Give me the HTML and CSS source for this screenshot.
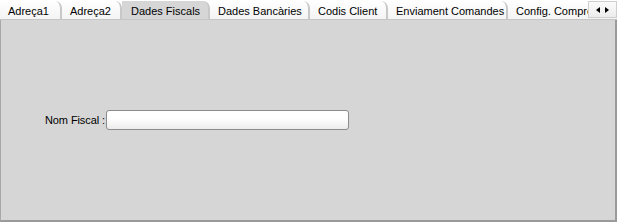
FILE: index.html
```html
<!DOCTYPE html>
<html>
<head>
    <title>Client</title>
    <link rel="stylesheet" href="styles.css">
</head>
<body>
    <div class="tab-window">
        <div class="tab-strip">
            <div class="tabs">
                <div class="tab" style="width: 62px">Adreça1</div>
                <div class="tab" style="width: 60px">Adreça2</div>
                <div class="tab active" style="width: 88px">Dades Fiscals</div>
                <div class="tab" style="width: 100px">Dades Bancàries</div>
                <div class="tab" style="width: 78px">Codis Client</div>
                <div class="tab" style="width: 120px">Enviament Comandes</div>
                <div class="tab last" style="width: 110px">Config. Compres</div>
            </div>
            <div class="scroll-btns">
                <span class="arrow left"></span>
                <span class="arrow right"></span>
            </div>
        </div>
        <div class="panel">
            <div class="field-row">
                <label class="field-label">Nom Fiscal :</label>
                <input type="text" class="field-input">
            </div>
        </div>
    </div>
</body>
</html>
```

FILE: styles.css
```css
* {
    box-sizing: border-box;
    margin: 0;
    padding: 0;
}

body {
    width: 617px;
    height: 222px;
    background: #ffffff;
    font-family: 'Liberation Sans', Arial, sans-serif;
    font-size: 11px;
    color: #000;
    overflow: hidden;
}

.tab-window {
    width: 617px;
    height: 222px;
    display: flex;
    flex-direction: column;
}

.tab-strip {
    height: 20px;
    display: flex;
    position: relative;
    background: #ffffff;
    border-bottom: 1px solid #c6c6c6;
}

.tabs {
    display: flex;
    flex: 1;
    overflow: hidden;
    padding-top: 1px;
}

.tab {
    flex: none;
    height: 19px;
    padding: 4px 0 0 8px;
    white-space: nowrap;
    overflow: hidden;
    background: linear-gradient(#ffffff, #f3f3f3);
    border-right: 2px solid #c8c8c8;
    border-top-right-radius: 7px;
}

.tab.active {
    background: #d6d6d6;
    height: 20px;
    margin-bottom: -1px;
    padding-left: 9px;
}

.tab.last {
    border-right: none;
}

.scroll-btns {
    position: absolute;
    right: 0;
    top: 1px;
    width: 29px;
    height: 17px;
    background: linear-gradient(#fbfbfb, #ececec);
    border: 1px solid #cfcfcf;
    display: flex;
    align-items: center;
    justify-content: center;
    gap: 5px;
}

.arrow {
    width: 0;
    height: 0;
    border-top: 3px solid transparent;
    border-bottom: 3px solid transparent;
}

.arrow.left {
    border-right: 4px solid #000;
}

.arrow.right {
    border-left: 4px solid #000;
}

.panel {
    flex: 1;
    background: #d6d6d6;
    border-left: 1px solid #a8a8a8;
    border-right: 2px solid #9a9a9a;
    border-bottom: 2px solid #9a9a9a;
    padding-top: 90px;
}

.field-row {
    display: flex;
    align-items: center;
    padding-left: 44px;
}

.field-label {
    margin-right: 1px;
    letter-spacing: -0.1px;
}

.field-input {
    width: 243px;
    height: 20px;
    border: 1px solid #8c8c8c;
    border-radius: 3px;
    background: linear-gradient(#ffffff 40%, #ececec);
    outline: none;
}
```
